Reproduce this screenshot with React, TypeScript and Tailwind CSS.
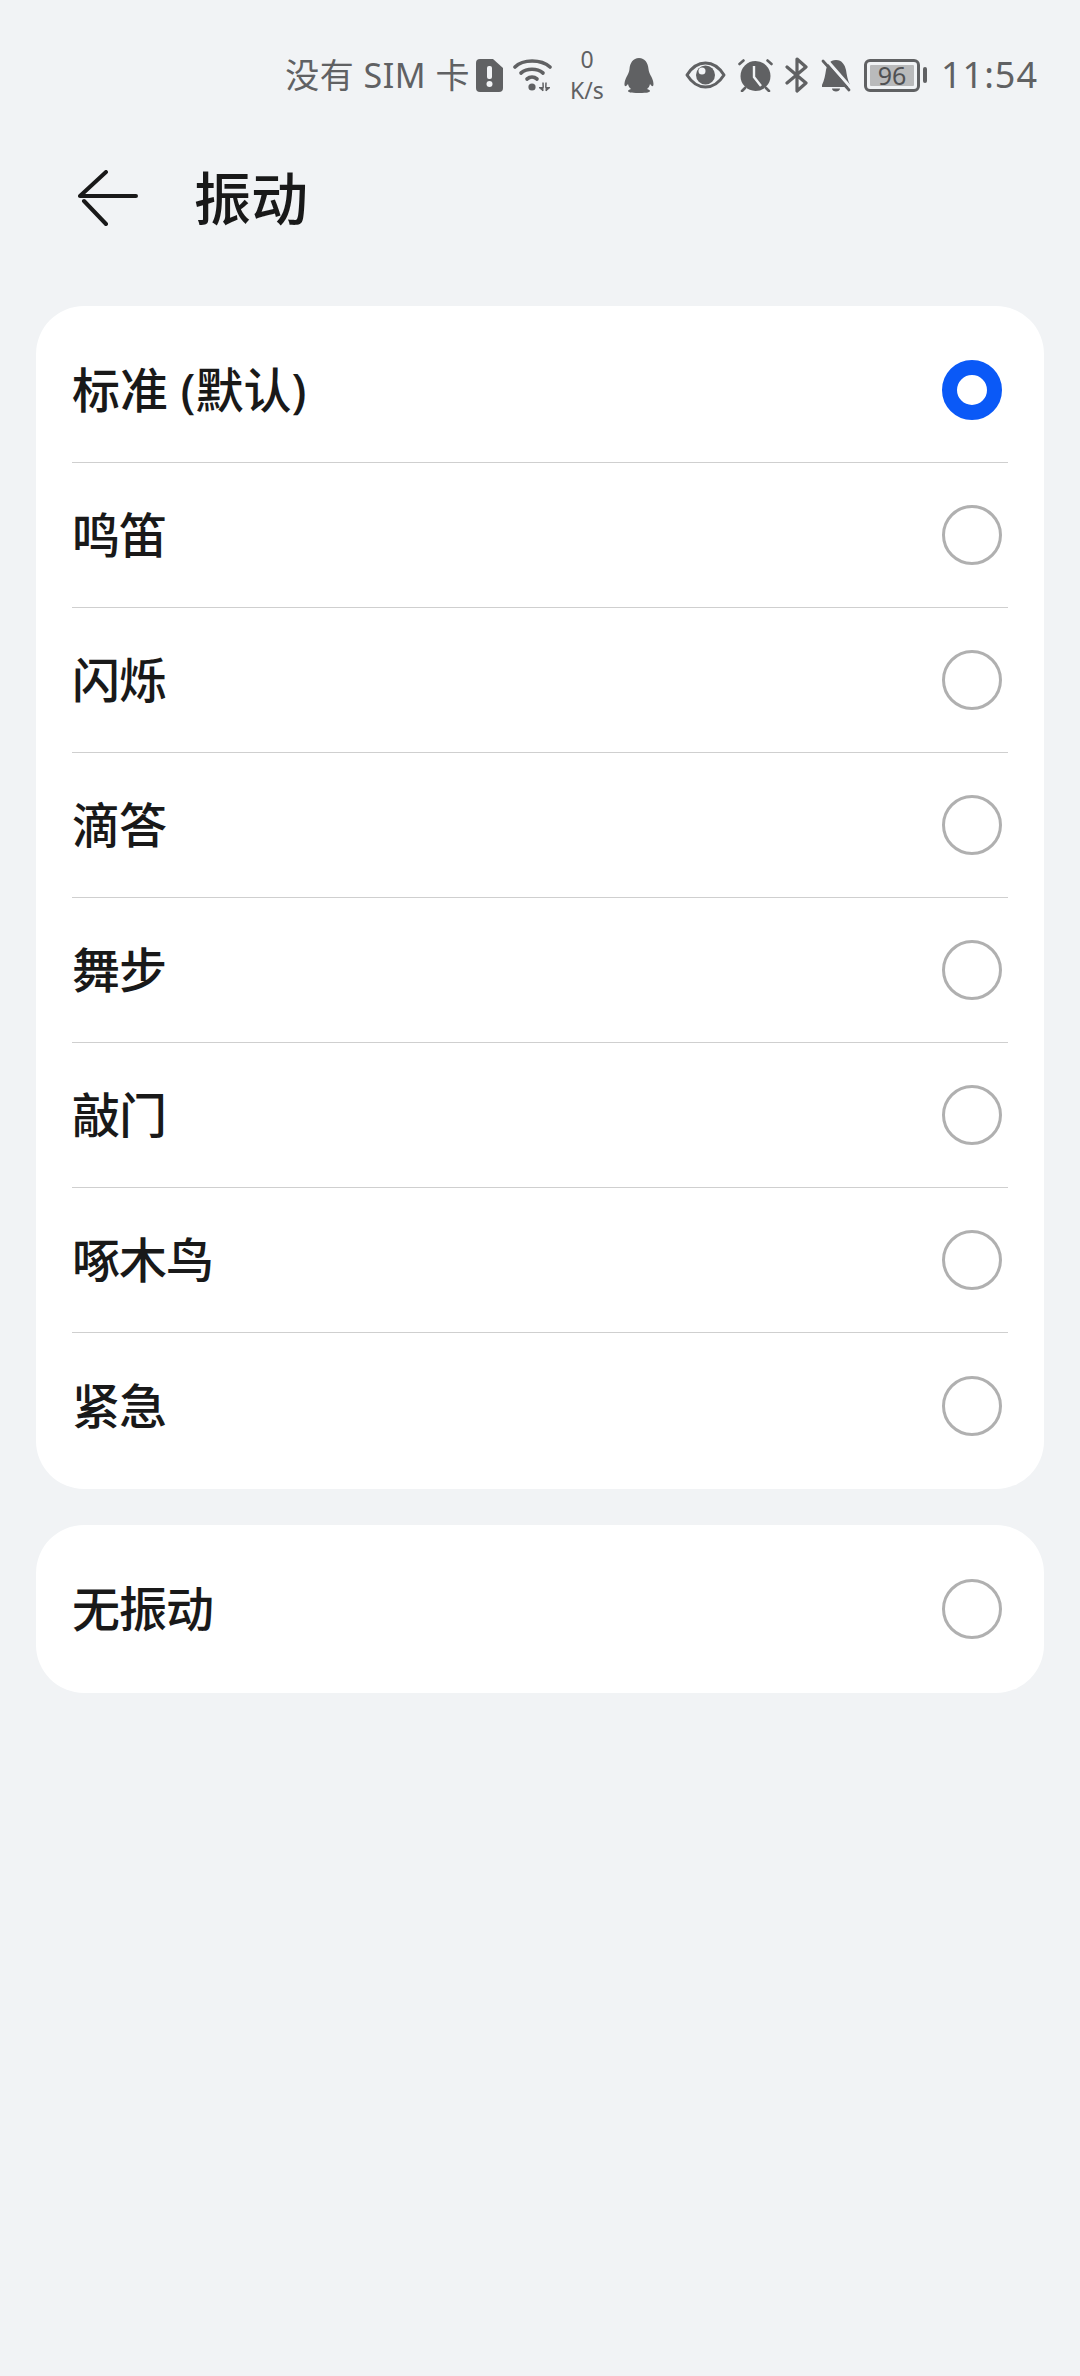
const font = { fontFamily: '"Noto Sans", "Noto Sans CJK SC", sans-serif' };

const options = ['标准 (默认)', '鸣笛', '闪烁', '滴答', '舞步', '敲门', '啄木鸟', '紧急'];

function Radio({ checked }: { checked?: boolean }) {
  if (checked) {
    return <div className="box-border w-[60px] h-[60px] rounded-full border-[15px] border-[#0a59f7] bg-white" />;
  }
  return <div className="box-border w-[60px] h-[60px] rounded-full border-[3px] border-[#b0b0b0] bg-white" />;
}

function Row({ label, checked, line }: { label: string; checked?: boolean; line?: boolean }) {
  return (
    <div className={`mx-[36px] h-[145px] flex items-center justify-between box-border ${line ? 'border-b border-[#cfcfcf]' : ''}`}>
      <span className={`text-[48px] leading-none font-medium text-[#191919] ${checked ? 'tracking-normal' : 'tracking-[-1px]'}`}>{label}</span>
      <div className="mr-[6px]">
        <Radio checked={checked} />
      </div>
    </div>
  );
}

function SimIcon() {
  return (
    <svg width="27" height="33" viewBox="0 0 27 33">
      <path d="M4 0h13l10 9v20a4 4 0 0 1-4 4H4a4 4 0 0 1-4-4V4a4 4 0 0 1 4-4z" fill="#606163" />
      <rect x="11" y="7" width="5" height="13" rx="2" fill="#f1f3f5" />
      <circle cx="13.500" cy="25" r="3" fill="#f1f3f5" />
    </svg>
  );
}

function WifiIcon() {
  return (
    <svg width="39" height="34" viewBox="0 0 39 34" fill="none" stroke="#606163" strokeWidth="3.6" strokeLinecap="round">
      <path d="M2 9C10 1 28 1 37 9" />
      <path d="M8 15c6-5 16-5 22 0" />
      <path d="M14 21c3-2.500 7-2.500 10 0" />
      <circle cx="19" cy="29" r="3.600" fill="#606163" stroke="none" />
      <path d="M30 25v8l-4-3.500h4z" fill="#606163" strokeWidth="1" />
      <path d="M33 25v8l4-3.500h-4z" fill="#606163" strokeWidth="1" />
    </svg>
  );
}

function QQIcon() {
  return (
    <svg width="30" height="35" viewBox="0 0 30 35" fill="#606163">
      <path d="M15 0c6 0 9 5 9.500 11 .2 3 1.500 5 3 8 2 4 2.500 8 1.500 9-.7.6-2-.5-3-2-.4 2-1.500 4-3 5 2 .8 3 1.500 3 2 0 1-2 2-11 2s-11-1-11-2c0-.5 1-1.200 3-2-1.500-1-2.600-3-3-5-1 1.500-2.300 2.600-3 2-1-1-.5-5 1.500-9 1.500-3 2.800-5 3-8C6 5 9 0 15 0z" />
    </svg>
  );
}

function EyeIcon() {
  return (
    <svg width="41" height="28" viewBox="0 0 41 28">
      <path d="M2 14C7 6 13 2 20.500 2S34 6 39 14c-5 8-11 12-18.500 12S7 22 2 14z" fill="none" stroke="#606163" strokeWidth="3" strokeLinejoin="round" />
      <circle cx="20.500" cy="14" r="9.500" fill="#606163" />
      <circle cx="17" cy="10" r="3.500" fill="#f1f3f5" />
    </svg>
  );
}

function AlarmIcon() {
  return (
    <svg width="35" height="33" viewBox="0 0 35 33">
      <circle cx="17.500" cy="17" r="15" fill="#606163" />
      <path d="M16 7v11l7 9" fill="none" stroke="#f1f3f5" strokeWidth="2.400" />
      <path d="M1.500 5l4-3.500M33.500 5l-4-3.500M4 32l3-3M31 32l-3-3" stroke="#606163" strokeWidth="2.600" strokeLinecap="round" />
    </svg>
  );
}

function BluetoothIcon() {
  return (
    <svg width="23" height="36" viewBox="0 0 23 36" fill="none" stroke="#606163" strokeWidth="3.200" strokeLinejoin="round" strokeLinecap="round">
      <path d="M2 10l19 16-9 8V2l9 8L2 26" />
    </svg>
  );
}

function BellIcon() {
  return (
    <svg width="32" height="33" viewBox="0 0 32 33" fill="#606163">
      <path d="M16 1c6 0 9 5 10 10 .8 5 1.500 10 4 15v2H2v-2c2.500-5 3.200-10 4-15C7 6 10 1 16 1z" />
      <path d="M12 29.500h8c0 4-8 4-8 0z" />
      <path d="M5 -1l27 31" fill="none" stroke="#f1f3f5" strokeWidth="3" />
      <path d="M3 2l26 29" fill="none" stroke="#606163" strokeWidth="2.800" strokeLinecap="round" />
    </svg>
  );
}

function Battery() {
  return (
    <div className="flex items-center">
      <div className="box-border w-[56px] h-[33px] rounded-[6px] border-[3px] border-[#606163] p-[3px] flex">
        <div className="flex-1 bg-[#b9babb] rounded-[1px] flex items-center justify-center text-[25px] leading-none text-[#505153]">96</div>
      </div>
      <div className="w-[4px] h-[16px] ml-[3px] rounded-[2px] bg-[#606163]" />
    </div>
  );
}

function StatusBar() {
  return (
    <div className="h-[150px] flex items-center justify-end pr-[42px] text-[#606163]">
      <span className="text-[34px] leading-none tracking-[0.5px] mr-[6px] whitespace-nowrap">没有 SIM 卡</span>
      <SimIcon />
      <div className="ml-[10px]"><WifiIcon /></div>
      <div className="ml-[15px] w-[40px] flex flex-col items-center">
        <span className="text-[23px] leading-[31px]">0</span>
        <span className="text-[23px] leading-[31px] whitespace-nowrap">K/s</span>
      </div>
      <div className="ml-[17px]"><QQIcon /></div>
      <div className="ml-[31px]"><EyeIcon /></div>
      <div className="ml-[12px]"><AlarmIcon /></div>
      <div className="ml-[12px]"><BluetoothIcon /></div>
      <div className="ml-[12px]"><BellIcon /></div>
      <div className="ml-[12px]"><Battery /></div>
      <span className="ml-[14px] text-[36px] leading-none tracking-[1px]">11:54</span>
    </div>
  );
}

export default function App() {
  return (
    <div className="w-[1080px] h-[2376px] bg-[#f1f3f5] overflow-hidden" style={font}>
      <StatusBar />
      <div className="h-[96px] flex items-center">
        <svg className="ml-[78px]" width="60" height="56" viewBox="0 0 60 56" fill="none" stroke="#191919" strokeWidth="4" strokeLinecap="round" strokeLinejoin="round">
          <path d="M58 26H2M28 2L2 26M6 31l22 23" />
        </svg>
        <span className="ml-[56px] text-[57px] leading-none font-medium text-[#191919]">振动</span>
      </div>
      <div className="mt-[60px] mx-[36px] rounded-[48px] bg-white pt-[12px] pb-[11px]">
        {options.map((o, i) => (
          <Row key={o} label={o} checked={i === 0} line={i < options.length - 1} />
        ))}
      </div>
      <div className="mt-[36px] mx-[36px] rounded-[48px] bg-white h-[168px] flex items-center">
        <div className="flex-1">
          <Row label="无振动" />
        </div>
      </div>
    </div>
  );
}
